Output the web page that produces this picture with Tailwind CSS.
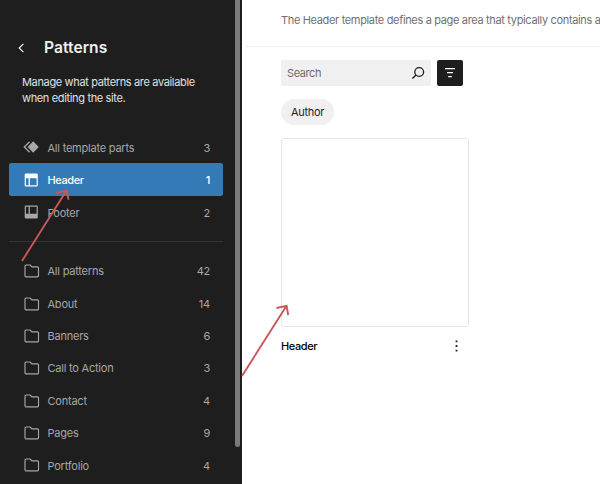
<!DOCTYPE html>
<html lang="en">
<head>
<meta charset="utf-8">
<title>Patterns</title>
<script src="https://cdn.jsdelivr.net/npm/@tailwindcss/browser@4"></script>
</head>
<body class="relative flex h-[484px] w-[600px] overflow-hidden bg-white font-['Inter','Liberation_Sans',sans-serif] text-[11px] antialiased">
<svg class="hidden">
  <symbol id="folder" viewBox="0 0 16 14"><path d="M2 1h4.2l1.7 1.8h5.6a1 1 0 0 1 1 1v8a1 1 0 0 1-1 1H2a1 1 0 0 1-1-1V2a1 1 0 0 1 1-1z" fill="none" stroke="currentColor" stroke-width="1.15"/></symbol>
</svg>
<aside class="relative h-full w-[242px] shrink-0 bg-[#1e1e1e] pt-[38px] pr-[19px] pl-[9px] tracking-[-0.22px] text-[#a7a7a7]">
  <header class="flex h-5 items-center pl-[9px] text-[#efefef]">
    <svg class="h-3 w-[7px]" viewBox="0 0 7 12"><path d="M5.4 1.8 1.2 6l4.2 4.2" fill="none" stroke="currentColor" stroke-width="1.2"/></svg>
    <h1 class="ml-[19px] text-[15.6px] leading-5 font-semibold tracking-[0.05px]">Patterns</h1>
  </header>
  <p class="mt-4 pl-[13px] leading-4 tracking-[-0.35px] whitespace-nowrap text-[#e0e0e0]">Manage what patterns are available<br>when editing the site.</p>
  <nav class="mt-[25px]">
    <ul>
      <li class="flex h-[32.35px] items-center pr-[13px] pl-[14px]"><svg class="h-4 w-4" viewBox="0 0 16 16"><path d="m10.2 2.2 5.6 5.8-5.6 5.8L4.6 8z" fill="currentColor"/><path d="M6.6 2.8 1.3 8l5.3 5.2" fill="none" stroke="currentColor" stroke-width="1.3"/></svg><span class="ml-[8.5px] flex-1 pt-[2px]">All template parts</span><span class="pt-[2px]">3</span></li>
      <li class="flex h-[32.35px] items-center rounded-[2px] bg-[#337ab7] pr-[13px] pl-[14px] font-medium text-white"><svg class="h-4 w-4" viewBox="0 0 16 16"><path fill-rule="evenodd" d="M3 1.5h10.5A1.3 1.3 0 0 1 14.8 2.8v10.4a1.3 1.3 0 0 1-1.3 1.3H3a1.3 1.3 0 0 1-1.3-1.3V2.8A1.3 1.3 0 0 1 3 1.5zM2.9 6.2v7.1h2.7V6.2zm4 0v7.1h6.7V6.2z" fill="currentColor"/></svg><span class="ml-[8.5px] flex-1 pt-[2px] tracking-[-0.4px]">Header</span><span class="pt-[2px]">1</span></li>
      <li class="flex h-[32.35px] items-center pr-[13px] pl-[14px]"><svg class="h-4 w-4" viewBox="0 0 16 16"><path fill-rule="evenodd" d="M3 1.5h10.5A1.3 1.3 0 0 1 14.8 2.8v10.4a1.3 1.3 0 0 1-1.3 1.3H3a1.3 1.3 0 0 1-1.3-1.3V2.8A1.3 1.3 0 0 1 3 1.5zM2.9 2.7v7.1h2.7V2.7zm4 0v7.1h6.7V2.7z" fill="currentColor"/></svg><span class="ml-[8.5px] flex-1 pt-[2px]">Footer</span><span class="pt-[2px]">2</span></li>
    </ul>
    <hr class="mt-[13px] mb-[13px] border-[#343434]">
    <ul>
      <li class="flex h-[32.35px] items-center pr-[13px] pl-[14.5px]"><svg class="h-[14px] w-4"><use href="#folder"/></svg><span class="ml-[8px] flex-1 pt-px">All patterns</span><span class="pt-px">42</span></li>
      <li class="flex h-[32.35px] items-center pr-[13px] pl-[14.5px]"><svg class="h-[14px] w-4"><use href="#folder"/></svg><span class="ml-[8px] flex-1 pt-px">About</span><span class="pt-px">14</span></li>
      <li class="flex h-[32.35px] items-center pr-[13px] pl-[14.5px]"><svg class="h-[14px] w-4"><use href="#folder"/></svg><span class="ml-[8px] flex-1 pt-px">Banners</span><span class="pt-px">6</span></li>
      <li class="flex h-[32.35px] items-center pr-[13px] pl-[14.5px]"><svg class="h-[14px] w-4"><use href="#folder"/></svg><span class="ml-[8px] flex-1 pt-px">Call to Action</span><span class="pt-px">3</span></li>
      <li class="flex h-[32.35px] items-center pr-[13px] pl-[14.5px]"><svg class="h-[14px] w-4"><use href="#folder"/></svg><span class="ml-[8px] flex-1 pt-px">Contact</span><span class="pt-px">4</span></li>
      <li class="flex h-[32.35px] items-center pr-[13px] pl-[14.5px]"><svg class="h-[14px] w-4"><use href="#folder"/></svg><span class="ml-[8px] flex-1 pt-px">Pages</span><span class="pt-px">9</span></li>
      <li class="flex h-[32.35px] items-center pr-[13px] pl-[14.5px]"><svg class="h-[14px] w-4"><use href="#folder"/></svg><span class="ml-[8px] flex-1 pt-px">Portfolio</span><span class="pt-px">4</span></li>
    </ul>
  </nav>
  <div class="absolute top-0 right-[2px] h-[446.5px] w-[5px] rounded-b-full bg-[#7b7b7b]"></div>
</aside>
<main class="min-w-0 flex-1 overflow-hidden text-[#1e1e1e]">
  <div class="ml-[3px] h-[47px] border-b border-[#f0f0f0] pt-3 pl-9 leading-4 tracking-[-0.34px] whitespace-nowrap text-[#707070]">The Header template defines a page area that typically contains a</div>
  <div class="flex flex-col items-start pt-[13px] pl-[39px]">
    <div class="flex gap-[6px]">
      <div class="flex h-[26px] w-[150px] items-center justify-between rounded-[2px] bg-[#f0f0f0] pr-[6px] pl-[6px] text-[#6b6b6b]">
        <span class="pt-px tracking-[-0.4px]">Search</span>
        <svg class="h-[14px] w-[14px] text-[#1e1e1e]" viewBox="0 0 14 14"><circle cx="8.2" cy="6" r="4.4" fill="none" stroke="currentColor" stroke-width="1.3"/><path d="m5 9.1-3.6 3.3" stroke="currentColor" stroke-width="1.4"/></svg>
      </div>
      <div class="flex h-[26px] w-[26px] items-center justify-center rounded-[2px] bg-[#1e1e1e]">
        <svg class="h-[14px] w-[14px]" viewBox="0 0 14 14"><path d="M2 2.7h10M4 6.7h6M5.2 10.7h3.6" stroke="#fff" stroke-width="1.25"/></svg>
      </div>
    </div>
    <div class="mt-[13px] flex h-[26px] w-[53px] items-center justify-center rounded-full bg-[#f0f0f0] tracking-[-0.3px]">Author</div>
    <div class="mt-[13px] h-[188.5px] w-[188px] rounded-[3px] border border-[#e6e6e6]"></div>
    <div class="mt-[11.5px] flex h-4 w-[188px] items-center justify-between pr-[10px] font-medium text-black">
      <span class="tracking-[-0.4px]">Header</span>
      <svg class="h-[14px] w-[5px]" viewBox="0 0 5 14"><path d="M1.6 1.5h1.8v1.8H1.6zM1.6 6.1h1.8v1.8H1.6zM1.6 10.7h1.8v1.8H1.6z" fill="#1e1e1e"/></svg>
    </div>
  </div>
</main>
<svg class="pointer-events-none absolute inset-0 h-[484px] w-[600px]" viewBox="0 0 600 484" fill="none" stroke="#c9565a" stroke-width="1.9">
  <path d="M22 261 66.5 190.5M56 193l10.7-2.7 1.8 9.5"/>
  <path d="M242 376 286.4 306M276.5 308l10.1-2.2 1.6 9.2"/>
</svg>
</body>
</html>
